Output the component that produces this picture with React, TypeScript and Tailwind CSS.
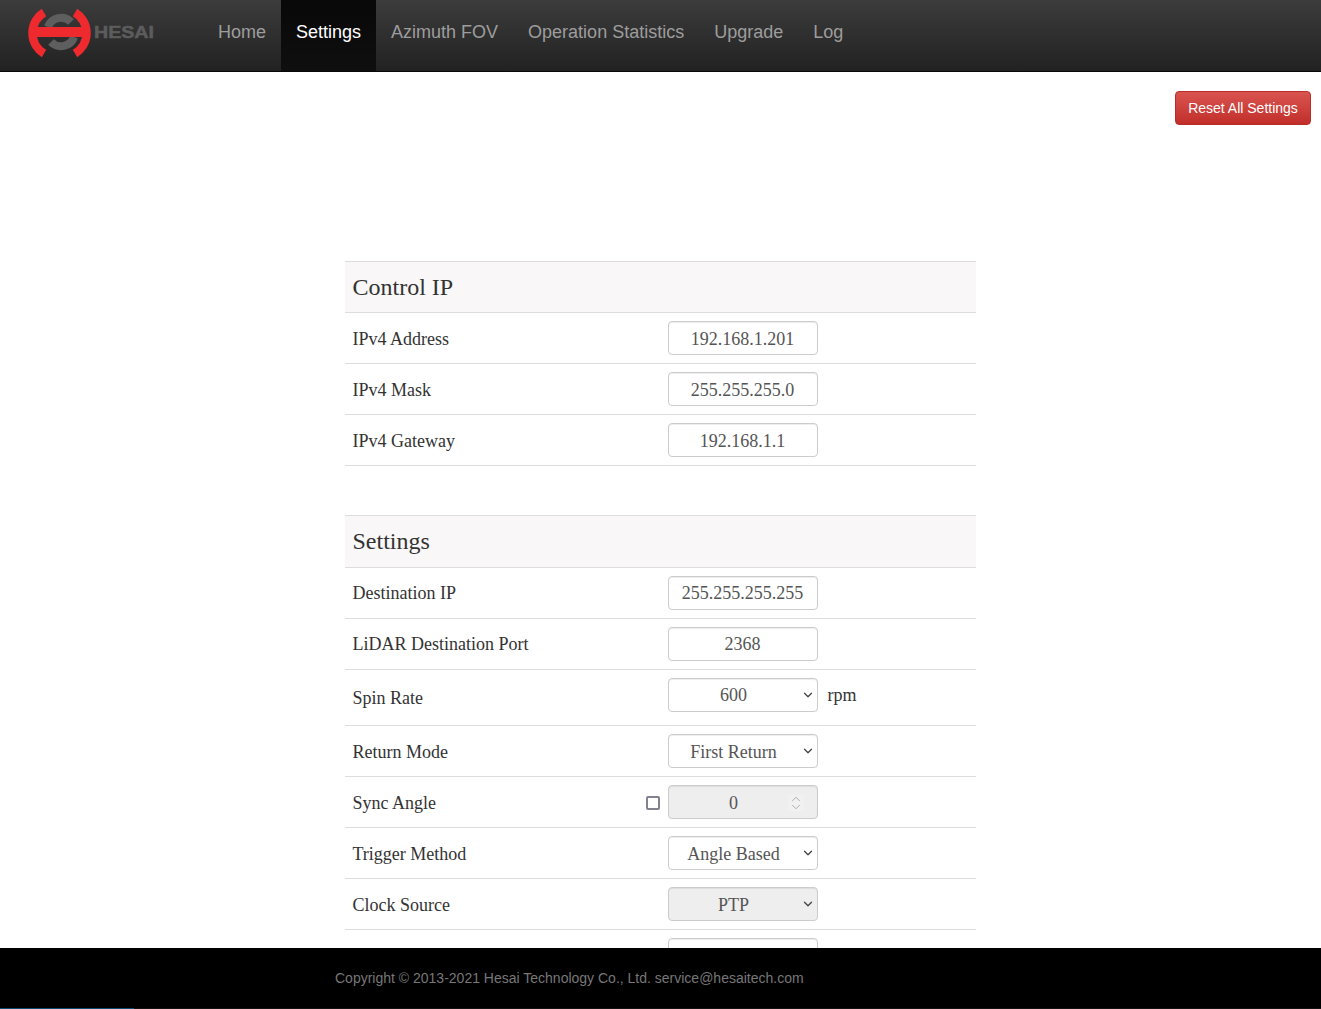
import { ChevronDown, ChevronUp } from "lucide-react"

const serif = "font-['Liberation_Serif',serif]"

const navItems = ["Home", "Settings", "Azimuth FOV", "Operation Statistics", "Upgrade", "Log"]

function Logo() {
  return (
    <svg width="126" height="60" viewBox="0 0 126 60" className="shrink-0">
      {/* grey ring behind the bar */}
      <path d="M19.9 25 A14 14 0 0 1 43 20" fill="none" stroke="#5e5e5e" strokeWidth="8" />
      <path d="M46.1 35 A14 14 0 0 1 23 40" fill="none" stroke="#5e5e5e" strokeWidth="8" />
      {/* red arcs */}
      <path d="M16 10.5 A24 24 0 0 0 16 51.5" fill="none" stroke="#ee2a2e" strokeWidth="8.5" />
      <path d="M47 10.5 A24 24 0 0 1 47 51.5" fill="none" stroke="#ee2a2e" strokeWidth="8.5" />
      <rect x="1" y="25" width="61" height="10" fill="#ee2a2e" />
      <text x="66" y="36" textLength="60" lengthAdjust="spacingAndGlyphs" fontSize="16" fontWeight="700" fontFamily="Liberation Sans, sans-serif" fill="#5c5c5c" stroke="#5c5c5c" strokeWidth="0.5">
        HESAI
      </text>
    </svg>
  )
}

function Navbar() {
  return (
    <nav className="flex h-[72px] shrink-0 border-b border-[#080808] bg-gradient-to-b from-[#3c3c3c] to-[#222222]">
      <div className="w-[203px] pl-[28px] pt-[2px]">
        <Logo />
      </div>
      <ul className="flex text-[18px]">
        {navItems.map((item) => (
          <li
            key={item}
            className={
              item === "Settings"
                ? "flex items-center bg-gradient-to-b from-[#080808] to-[#0f0f0f] px-[15px] pb-[6px] text-white"
                : "flex items-center px-[15px] pb-[6px] text-[#9d9d9d]"
            }
          >
            {item}
          </li>
        ))}
      </ul>
    </nav>
  )
}

function SectionHead({ title, className = "h-[52px]" }: { title: string; className?: string }) {
  return (
    <div className={`flex items-center border-y border-[#dddddd] bg-[#f9f7f7] pl-[7.5px] text-[24px] text-[#333333] ${className}`}>
      {title}
    </div>
  )
}

const fieldClass =
  "h-[34px] w-[150px] rounded border border-[#cccccc] text-center text-[18px] text-[#555555] shadow-[inset_0_1px_1px_rgba(0,0,0,0.075)] outline-none"

function Row({ label, children, tall, flush }: { label: string; children: React.ReactNode; tall?: boolean; flush?: boolean }) {
  return (
    <div className={`grid grid-cols-2 border-b border-[#dddddd] ${tall ? "h-[56px]" : "h-[51px]"}`}>
      <div className={`flex items-center pl-[7.5px] text-[18px] text-[#333333] ${flush ? "" : "pt-[2px]"}`}>{label}</div>
      <div className="flex items-start gap-[10px] pl-[7px] pt-2">{children}</div>
    </div>
  )
}

function TextField({ value, flush }: { value: string; flush?: boolean }) {
  return <input readOnly value={value} className={`${fieldClass} bg-white ${flush ? "" : "pt-[2px]"}`} />
}

function SelectField({ value, disabled, flush }: { value: string; disabled?: boolean; flush?: boolean }) {
  return (
    <div className="relative h-[34px] w-[150px]">
      <select
        value={value}
        disabled={disabled}
        onChange={() => {}}
        className={`${fieldClass} appearance-none pr-[18px] opacity-100 ${disabled ? "bg-[#eeeeee]" : "bg-white"} ${flush ? "" : "pt-[2px]"}`}
      >
        <option>{value}</option>
      </select>
      <ChevronDown size={14} strokeWidth={2.2} className="pointer-events-none absolute right-[3px] top-[10px] text-[#444444]" />
    </div>
  )
}

function SyncAngleField() {
  return (
    <div className="relative h-[34px] w-[150px]">
      <input
        type="number"
        disabled
        value={0}
        className={`${fieldClass} bg-[#eeeeee] pr-[18px] pt-[2px] opacity-100 [&::-webkit-inner-spin-button]:appearance-none`}
      />
      <div className="pointer-events-none absolute right-[14px] top-[10px] flex h-[16px] w-[16px] flex-col items-center justify-center bg-[#f1f1f1] text-[#a3a3a3]">
        <ChevronUp size={14} strokeWidth={1.5} className="-my-[3px]" />
        <ChevronDown size={14} strokeWidth={1.5} className="-my-[3px]" />
      </div>
    </div>
  )
}

function SettingsTable() {
  return (
    <div className={`mx-auto mt-[136px] w-[631px] ${serif}`}>
      <SectionHead title="Control IP" />
      <Row label="IPv4 Address">
        <TextField value="192.168.1.201" />
      </Row>
      <Row label="IPv4 Mask">
        <TextField value="255.255.255.0" />
      </Row>
      <Row label="IPv4 Gateway">
        <TextField value="192.168.1.1" />
      </Row>

      <div className="h-[49px]" />

      <SectionHead title="Settings" className="h-[53px] pb-[2px]" />
      <Row label="Destination IP" flush>
        <TextField value="255.255.255.255" flush />
      </Row>
      <Row label="LiDAR Destination Port" flush>
        <TextField value="2368" flush />
      </Row>
      <Row label="Spin Rate" tall>
        <SelectField value="600" flush />
        <span className="text-[18px] leading-[34px] text-[#333333]">rpm</span>
      </Row>
      <Row label="Return Mode">
        <SelectField value="First Return" />
      </Row>
      <div className="relative">
        <Row label="Sync Angle">
          <SyncAngleField />
        </Row>
        <input
          type="checkbox"
          className="absolute left-[301px] top-[19px] m-0 h-[14px] w-[14px] appearance-none rounded-[2px] border-2 border-[#81818f] bg-white"
        />
      </div>
      <Row label="Trigger Method">
        <SelectField value="Angle Based" />
      </Row>
      <Row label="Clock Source">
        <SelectField value="PTP" disabled />
      </Row>
      <Row label="">
        <TextField value="" />
      </Row>
    </div>
  )
}

function Footer() {
  return (
    <footer className="shrink-0 bg-black">
      <div className="flex h-[60px] items-center pl-[335px] text-[14px] text-[#777777]">
        Copyright © 2013-2021 Hesai Technology Co., Ltd. service@hesaitech.com
      </div>
      <div className="h-px bg-[#111111]">
        <div className="h-px w-[134px] bg-[#0b4a70]" />
      </div>
    </footer>
  )
}

export default function App() {
  return (
    <div className="flex h-[1009px] flex-col overflow-hidden bg-white font-['Liberation_Sans',sans-serif]">
      <Navbar />
      <main className="min-h-0 flex-1 overflow-hidden">
        <div className="flex justify-end pr-[10px] pt-[19px]">
          <button className="h-[34px] w-[136px] rounded border border-[#b92c28] bg-gradient-to-b from-[#d9534f] to-[#c12e2a] text-[14px] text-white">
            Reset All Settings
          </button>
        </div>
        <SettingsTable />
      </main>
      <Footer />
    </div>
  )
}
